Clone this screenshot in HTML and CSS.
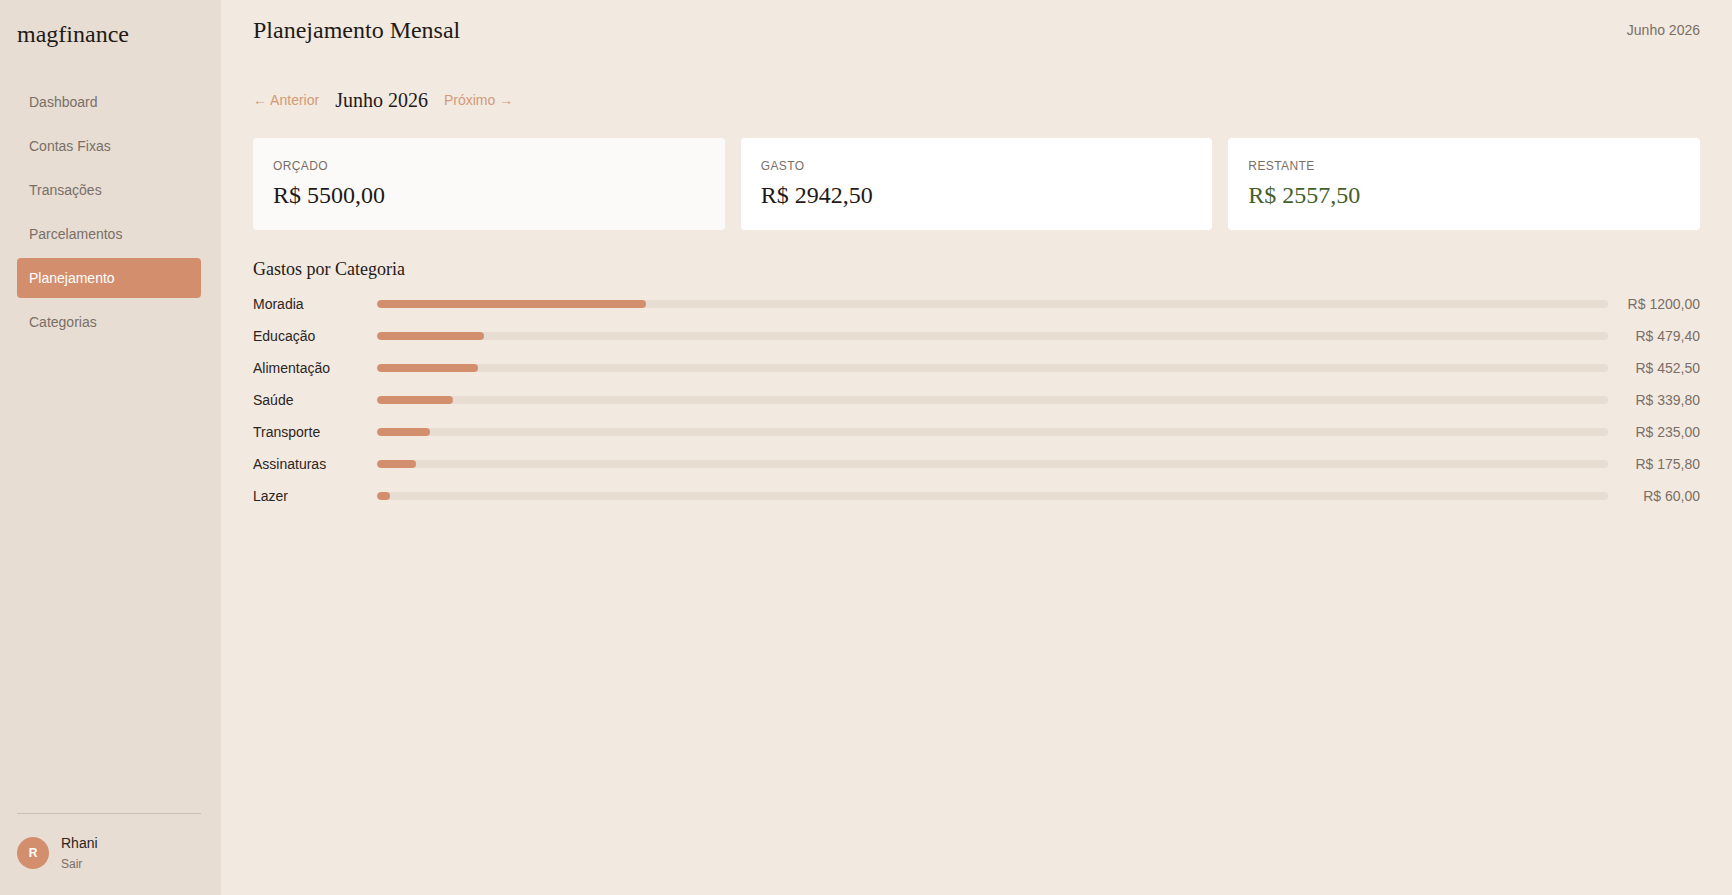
FILE: index.html
```html
<!DOCTYPE html>
<html lang="pt-BR">
<head>
  <meta charset="UTF-8" />
  <meta name="viewport" content="width=device-width, initial-scale=1.0" />
  <title>magfinance · Planejamento</title>
  <link rel="stylesheet" href="styles.css">
</head>
<body>
  <div class="app">
    <aside class="sidebar">
      <div class="logo">magfinance</div>
      <nav class="nav">
        <a class="nav-item" href="#">Dashboard</a>
        <a class="nav-item" href="#">Contas Fixas</a>
        <a class="nav-item" href="#">Transações</a>
        <a class="nav-item" href="#">Parcelamentos</a>
        <a class="nav-item active" href="#">Planejamento</a>
        <a class="nav-item" href="#">Categorias</a>
      </nav>
      <div class="user">
        <div class="avatar">R</div>
        <div class="user-info">
          <div class="user-name">Rhani</div>
          <a class="logout" href="#">Sair</a>
        </div>
      </div>
    </aside>

    <main class="main">
      <header class="topbar">
        <h1>Planejamento Mensal</h1>
        <span class="current-month">Junho 2026</span>
      </header>

      <div class="month-nav">
        <a class="month-link" href="#">&larr; Anterior</a>
        <span class="month-label">Junho 2026</span>
        <a class="month-link" href="#">Próximo &rarr;</a>
      </div>

      <section class="summary">
        <div class="card card-hover">
          <div class="card-label">Orçado</div>
          <div class="card-value">R$ 5500,00</div>
        </div>
        <div class="card">
          <div class="card-label">Gasto</div>
          <div class="card-value">R$ 2942,50</div>
        </div>
        <div class="card">
          <div class="card-label">Restante</div>
          <div class="card-value positive">R$ 2557,50</div>
        </div>
      </section>

      <section class="categories">
        <h2>Gastos por Categoria</h2>
        <div id="category-list"></div>
      </section>
    </main>
  </div>

  <script>
    const budget = 5500;
    const categories = [
      { name: 'Moradia', value: 1200.00 },
      { name: 'Educação', value: 479.40 },
      { name: 'Alimentação', value: 452.50 },
      { name: 'Saúde', value: 339.80 },
      { name: 'Transporte', value: 235.00 },
      { name: 'Assinaturas', value: 175.80 },
      { name: 'Lazer', value: 60.00 }
    ];

    function formatMoney(v) {
      return 'R$ ' + v.toFixed(2).replace('.', ',');
    }

    const list = document.getElementById('category-list');
    categories.forEach(cat => {
      const pct = (cat.value / budget * 100).toFixed(2);
      const row = document.createElement('div');
      row.className = 'category-row';
      row.innerHTML =
        '<span class="category-name">' + cat.name + '</span>' +
        '<div class="bar"><div class="bar-fill" style="width: ' + pct + '%"></div></div>' +
        '<span class="category-value">' + formatMoney(cat.value) + '</span>';
      list.appendChild(row);
    });
  </script>
</body>
</html>
```

FILE: styles.css
```css
* {
  box-sizing: border-box;
}
body {
  margin: 0;
  font-family: 'Liberation Sans', Arial, sans-serif;
  background-color: #f2e9e1;
  color: #2b2522;
}
a {
  text-decoration: none;
}
.app {
  display: flex;
  height: 100vh;
}

/* sidebar */
.sidebar {
  width: 221px;
  flex-shrink: 0;
  background-color: #e7ddd3;
  display: flex;
  flex-direction: column;
  padding: 20px 20px 24px 17px;
}
.logo {
  font-family: 'Liberation Serif', 'Times New Roman', serif;
  font-size: 24px;
  line-height: 28px;
  color: #1f1a18;
}
.nav {
  flex: 1;
  display: flex;
  flex-direction: column;
  gap: 4px;
  margin-top: 34px;
}
.nav-item {
  display: block;
  height: 40px;
  line-height: 40px;
  padding: 0 12px;
  border-radius: 4px;
  font-size: 14px;
  color: #7a6f67;
}
.nav-item.active {
  background-color: #d38f6d;
  color: #fff;
}
.user {
  display: flex;
  align-items: center;
  gap: 12px;
  border-top: 1px solid #c9bfb6;
  padding-top: 20px;
}
.avatar {
  width: 32px;
  height: 32px;
  border-radius: 50%;
  background-color: #d38f6d;
  color: #fff;
  font-size: 12px;
  font-weight: bold;
  display: flex;
  align-items: center;
  justify-content: center;
}
.user-info {
  display: flex;
  flex-direction: column;
  gap: 5px;
}
.user-name {
  font-size: 14px;
  line-height: 18px;
  color: #2b2522;
}
.logout {
  font-size: 12px;
  line-height: 14px;
  color: #7a6f67;
}

/* main area */
.main {
  flex: 1;
  padding: 16px 32px;
}
.topbar {
  display: flex;
  justify-content: space-between;
  align-items: center;
}
.topbar h1 {
  margin: 0;
  font-family: 'Liberation Serif', 'Times New Roman', serif;
  font-weight: normal;
  font-size: 24px;
  line-height: 28px;
  color: #1f1a18;
}
.current-month {
  font-size: 14px;
  color: #7a6f67;
}
.month-nav {
  display: flex;
  align-items: center;
  gap: 16px;
  margin-top: 44px;
  height: 24px;
}
.month-link {
  font-size: 14px;
  color: #d39a76;
}
.month-label {
  font-family: 'Liberation Serif', 'Times New Roman', serif;
  font-size: 20px;
  color: #1f1a18;
}

/* summary cards */
.summary {
  display: grid;
  grid-template-columns: repeat(3, 1fr);
  gap: 16px;
  margin-top: 26px;
}
.card {
  background-color: #fff;
  border-radius: 4px;
  padding: 21px 20px 20px;
  height: 92px;
}
.card-hover {
  background-color: #fcfaf8;
}
.card-label {
  font-size: 12px;
  line-height: 14px;
  text-transform: uppercase;
  letter-spacing: 0.4px;
  color: #7a6f67;
}
.card-value {
  margin-top: 8px;
  font-family: 'Liberation Serif', 'Times New Roman', serif;
  font-size: 24px;
  line-height: 29px;
  color: #1f1a18;
}
.card-value.positive {
  color: #44602a;
}

/* category bars */
.categories {
  margin-top: 28px;
}
.categories h2 {
  margin: 0 0 8px;
  font-family: 'Liberation Serif', 'Times New Roman', serif;
  font-weight: normal;
  font-size: 18px;
  line-height: 22px;
  color: #1f1a18;
}
.category-row {
  display: grid;
  grid-template-columns: 112px 1fr 80px;
  gap: 12px;
  align-items: center;
  height: 32px;
}
.category-name {
  font-size: 14px;
  color: #2b2522;
}
.bar {
  height: 8px;
  border-radius: 4px;
  background-color: #e7ddd3;
  overflow: hidden;
}
.bar-fill {
  height: 100%;
  border-radius: 4px;
  background-color: #d38f6d;
}
.category-value {
  font-size: 14px;
  text-align: right;
  color: #7a6f67;
}
```
